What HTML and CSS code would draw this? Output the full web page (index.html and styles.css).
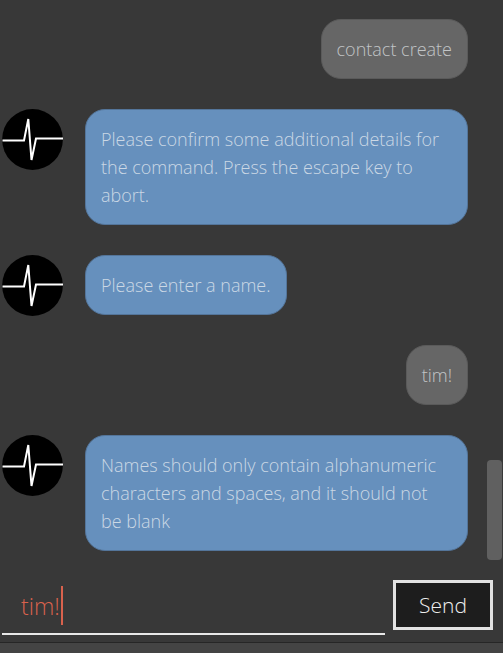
FILE: index.html
```html
<!DOCTYPE html>
<html lang="en">
<head>
<meta charset="utf-8">
<title>Chat</title>
<link rel="stylesheet" href="styles.css">
</head>
<body>
<svg class="defs" aria-hidden="true">
  <symbol id="pulse" viewBox="0 0 61 61">
    <circle cx="30.5" cy="30.5" r="30.4" fill="#000"/>
    <path d="M0.5 31.5H22L26.3 10L29.5 51L34 29.5H61" fill="none" stroke="#fff" stroke-width="2"/>
  </symbol>
</svg>
<main class="chat">
  <div class="messages">
    <div class="row sent"><p class="bubble">contact create</p></div>
    <div class="row"><svg class="avatar" aria-hidden="true"><use href="#pulse"/></svg><p class="bubble">Please confirm some additional details for the command. Press the escape key to abort.</p></div>
    <div class="row"><svg class="avatar" aria-hidden="true"><use href="#pulse"/></svg><p class="bubble">Please enter a name.</p></div>
    <div class="row sent"><p class="bubble">tim!</p></div>
    <div class="row"><svg class="avatar" aria-hidden="true"><use href="#pulse"/></svg><p class="bubble">Names should only contain alphanumeric characters and spaces, and it should not be blank</p></div>
  </div>
  <div class="track"><div class="thumb"></div></div>
</main>
<form class="composer">
  <div class="field">
    <input class="command" type="text" value="tim!" aria-label="Command">
    <span class="caret"></span>
  </div>
  <button class="send" type="button">Send</button>
</form>
<footer class="status"></footer>
</body>
</html>
```
FILE: styles.css
```css
* { box-sizing: border-box; }

body {
  margin: 0;
  min-height: 100vh;
  display: flex;
  flex-direction: column;
  background: #383838;
  font-family: "Open Sans", "Noto Sans", sans-serif;
  font-weight: 300;
}

.defs { position: absolute; width: 0; height: 0; }

.chat { display: flex; }

.messages {
  flex: 1;
  display: flex;
  flex-direction: column;
  gap: 30px;
  padding: 19px 19px 9px 2px;
}

.row { display: flex; align-items: flex-start; gap: 22px; }
.sent { justify-content: flex-end; }

.avatar { flex: none; width: 61px; height: 61px; margin-bottom: -1px; }

.bubble {
  margin: 0;
  padding: 15px;
  border: 1px solid #54759a;
  border-radius: 20px;
  background: #6690bd;
  color: #cbd8e5;
  font-size: 18px;
  line-height: 28px;
}

.sent .bubble {
  border-color: #5a5a5a;
  background: #666;
  color: #c2c5c6;
}

.track {
  flex: none;
  width: 16px;
  display: flex;
  flex-direction: column;
  justify-content: flex-end;
}

.thumb {
  width: 15px;
  height: 100px;
  border-radius: 4px;
  background: #606060;
}

.composer {
  display: flex;
  align-items: flex-start;
  gap: 8px;
  padding: 20px 10px 7px 2px;
}

.field { position: relative; flex: 1; }

.command {
  display: block;
  width: 100%;
  height: 55px;
  padding: 0 19px 2px;
  border: 0;
  border-bottom: 2px solid #e8e8e8;
  outline: 0;
  background: transparent;
  color: #d9624d;
  font: inherit;
  font-size: 23px;
}

.caret {
  position: absolute;
  top: 6px;
  left: 59px;
  width: 2px;
  height: 39px;
  background: #d9624d;
}

.send {
  width: 100px;
  height: 50px;
  padding: 0;
  border: 3px solid #e2e2e2;
  background: #1d1d1d;
  color: #f0f0f0;
  font: inherit;
  font-size: 21px;
}

.status {
  flex: 1;
  border-top: 1px solid #262626;
  background: #444;
}
```
